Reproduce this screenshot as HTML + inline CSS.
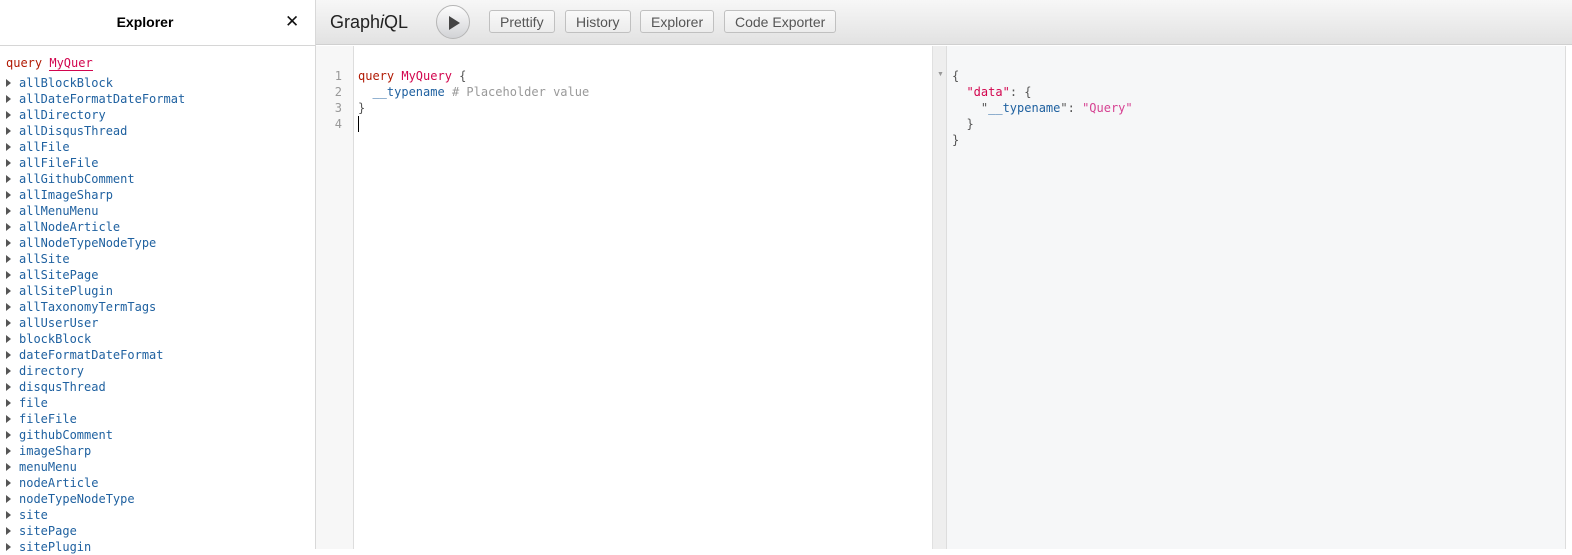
<!DOCTYPE html>
<html><head><style>
*{margin:0;padding:0;box-sizing:border-box}
body{width:1572px;height:549px;overflow:hidden;background:#fff;font-family:"Liberation Sans",sans-serif;position:relative}
.mono{font-family:"DejaVu Sans Mono",monospace;font-size:12px}
#exp{position:absolute;left:0;top:0;width:316px;height:549px;border-right:1px solid #d8d8d8;background:#fff}
#exph{height:46px;border-bottom:1px solid #d6d6d6;position:relative}
#exph b{position:absolute;left:0;width:290px;text-align:center;top:14px;font-size:14px;color:#000}
#exph i{position:absolute;left:285px;top:12px;font-style:normal;font-size:17px;color:#111}
#list{position:absolute;left:6px;top:55px;line-height:16px}
.it{color:#1f61a0;height:16px;white-space:nowrap}
.it:before{content:"";display:inline-block;width:0;height:0;border-left:5px solid #555;border-top:4px solid transparent;border-bottom:4px solid transparent;margin-right:8px;vertical-align:0}
#tb{position:absolute;left:316px;top:0;width:1256px;height:45px;background:linear-gradient(#f7f7f7,#e2e2e2);border-bottom:1px solid #d0d0d0}
#logo{position:absolute;left:14px;top:12px;font-size:18px;color:#222}
#run{position:absolute;left:120px;top:5px;width:34px;height:34px;border-radius:50%;border:1px solid #b5b5b5;background:linear-gradient(#fdfdfd,#d2d3d6)}
#run:after{content:"";position:absolute;left:12px;top:10px;border-left:11px solid #444;border-top:7px solid transparent;border-bottom:7px solid transparent}
.btn{position:absolute;top:10px;height:23px;border:1px solid #c0c0c0;border-radius:3px;background:linear-gradient(#f9f9f9,#ececec);font-size:14px;color:#555;padding:2px 10px 0;line-height:18px}
#gut{position:absolute;left:316px;top:46px;width:38px;height:503px;background:#f7f7f7;border-right:1px solid #ddd}
#ed{position:absolute;left:358px;top:68px;line-height:16px}
.ln{position:absolute;left:316px;width:26px;text-align:right;color:#999}
#res{position:absolute;left:932px;top:46px;width:634px;height:503px;background:#f6f7f8;border-left:1px solid #e0e0e0;border-right:1px solid #ddd}
#rg{position:absolute;left:0;top:0;width:14px;height:503px;background:#eeeeee;border-right:1px solid #ddd}
#rj{position:absolute;left:19px;top:22px;line-height:16px;color:#555}
</style></head><body>
<div id="exp"><div id="exph"><b>Explorer</b><i>✕</i></div>
<div id="list" class="mono">
<div style="color:#b11a04;height:20px">query <span style="color:#d2054e;border-bottom:1px solid #d2054e">MyQuer</span></div>
<div class="it">allBlockBlock</div><div class="it">allDateFormatDateFormat</div><div class="it">allDirectory</div><div class="it">allDisqusThread</div><div class="it">allFile</div><div class="it">allFileFile</div><div class="it">allGithubComment</div><div class="it">allImageSharp</div><div class="it">allMenuMenu</div><div class="it">allNodeArticle</div><div class="it">allNodeTypeNodeType</div><div class="it">allSite</div><div class="it">allSitePage</div><div class="it">allSitePlugin</div><div class="it">allTaxonomyTermTags</div><div class="it">allUserUser</div><div class="it">blockBlock</div><div class="it">dateFormatDateFormat</div><div class="it">directory</div><div class="it">disqusThread</div><div class="it">file</div><div class="it">fileFile</div><div class="it">githubComment</div><div class="it">imageSharp</div><div class="it">menuMenu</div><div class="it">nodeArticle</div><div class="it">nodeTypeNodeType</div><div class="it">site</div><div class="it">sitePage</div><div class="it">sitePlugin</div>
</div></div>
<div id="tb"><div id="logo">Graph<i>i</i>QL</div><div id="run"></div>
<div class="btn" style="left:173px">Prettify</div><div class="btn" style="left:249px">History</div><div class="btn" style="left:324px">Explorer</div><div class="btn" style="left:408px">Code Exporter</div></div>
<div id="gut"></div>
<div class="mono">
<div class="ln" style="top:68px;line-height:16px">1<br>2<br>3<br>4</div>
<div id="ed"><span style="color:#b11a04">query</span> <span style="color:#d2054e">MyQuery</span> <span style="color:#555">{</span><br>&nbsp;&nbsp;<span style="color:#1f61a0">__typename</span> <span style="color:#999">#&nbsp;Placeholder&nbsp;value</span><br><span style="color:#555">}</span><br><span style="display:inline-block;width:1px;height:16px;background:#000;vertical-align:top"></span></div>
</div>
<div id="res"><div id="rg"><span style="position:absolute;left:4px;top:25px;font-size:7px;color:#999">▼</span></div>
<div id="rj" class="mono">{<br>&nbsp;&nbsp;<span style="color:#d2054e">"data"</span>: {<br>&nbsp;&nbsp;&nbsp;&nbsp;"<span style="color:#1f61a0">__typename</span>": <span style="color:#d64292">"Query"</span><br>&nbsp;&nbsp;}<br>}</div></div>
</body></html>
